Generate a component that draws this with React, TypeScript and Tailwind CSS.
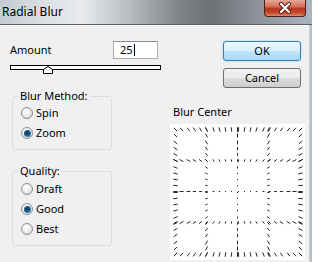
import React from "react";

const FONT = "font-['Noto_Sans','Liberation_Sans',sans-serif]";

function Radio({ label, checked }: { label: string; checked?: boolean }) {
  return (
    <div className="flex h-[20px] items-center pl-[8px]">
      <div className="flex h-[12px] w-[12px] items-center justify-center rounded-full border border-[#8f8f8f] bg-[radial-gradient(circle_at_40%_35%,#ffffff_0%,#ececec_50%,#cfcfcf_100%)]">
        {checked && (
          <div className="h-[7px] w-[7px] rounded-full bg-[radial-gradient(circle_at_45%_40%,#0e3a58_0%,#1c6590_55%,#7ccbea_100%)]" />
        )}
      </div>
      <span className="ml-[3px] text-[11px] leading-[14px] text-black">{label}</span>
    </div>
  );
}

function Group({ title, className, children }: { title: string; className: string; children: React.ReactNode }) {
  return (
    <fieldset className={`ml-[2px] w-[100px] rounded-[3px] border border-[#d9dee2] ${className}`}>
      <legend className="ml-[5px] px-[2px] text-[11px] leading-[14px] text-black">{title}</legend>
      {children}
    </fieldset>
  );
}

// zoom preview: short strokes along a 5x5 grid, each pointing at the centre
function BlurCenter() {
  const W = 135;
  const H = 136;
  const cx = 67.5;
  const cy = 67.5;
  const lines = [5, 36, 67, 98, 130];
  const pts: [number, number][] = [];
  for (const g of lines) {
    for (let i = 0; i <= 20; i++) {
      const t = Math.round(5 + i * 6.25);
      pts.push([t, g]);
      pts.push([g, t]);
    }
  }
  return (
    <svg width={W} height={H} className="block bg-white">
      {pts.map(([x, y], i) => {
        const dx = x + 0.5 - cx;
        const dy = y + 0.5 - cy;
        const d = Math.hypot(dx, dy);
        if (d < 1) return null;
        const len = Math.max(1, Math.min(4.5, d * 0.075));
        const ux = (dx / d) * (len / 2);
        const uy = (dy / d) * (len / 2);
        return (
          <line
            key={i}
            x1={x + 0.5 - ux}
            y1={y + 0.5 - uy}
            x2={x + 0.5 + ux}
            y2={y + 0.5 + uy}
            stroke="#111"
            strokeWidth={0.9}
          />
        );
      })}
    </svg>
  );
}

export default function App() {
  return (
    <div className={`relative h-[262px] w-[312px] overflow-hidden bg-[#f0f0f0] ${FONT}`}>
      {/* Title bar */}
      <div className="relative h-[25px] border-b border-[#5b6167] bg-[linear-gradient(90deg,#c3cad2_0%,#dce0e4_14%,#e9ebed_26%,#b7bbbf_42%,#7d8287_58%,#6c7176_68%,#8b9197_82%,#a9b6c3_100%)]">
        <span className="absolute left-[2px] top-[4px] text-[12px] leading-[16px] text-black">Radial Blur</span>
        <div className="absolute right-[6px] top-0 flex h-[17px] w-[42px] items-center justify-center rounded-b-[4px] border border-t-0 border-[#4f2219] bg-[linear-gradient(180deg,#e7a897_0%,#d4705a_40%,#b8331c_55%,#c44a2c_80%,#e0876a_100%)]">
          <svg width="14" height="12" viewBox="0 0 14 12">
            <path d="M3 2 L11 10 M11 2 L3 10" stroke="#4a1c14" strokeWidth="4" strokeLinecap="round" />
            <path d="M3 2 L11 10 M11 2 L3 10" stroke="#fff" strokeWidth="2.2" strokeLinecap="round" />
          </svg>
        </div>
      </div>
      <div className="h-px bg-[#fafafa]" />

      {/* Body */}
      <div className="flex pl-[10px] pt-[15px]">
        <div className="w-[151px]">
          <div className="flex h-[18px] items-center justify-between pr-[3px]">
            <span className="text-[11px] leading-[14px] text-black">Amount</span>
            <div className="flex h-[18px] w-[45px] items-center border border-[#abadb3] border-t-[#8a8c93] bg-white pl-[6px]">
              <span className="text-[11px] leading-[14px] text-black">25</span>
              <div className="ml-px h-[12px] w-px bg-black" />
            </div>
          </div>
          <div className="relative mt-[6px] h-[9px]">
            <div className="h-[5px] w-[151px] border border-black bg-white" />
            <svg width="10" height="8" className="absolute left-[33px] top-[1px]">
              <path d="M0.5 7.5 L0.5 3.5 L5 0.5 L9.5 3.5 L9.5 7.5 Z" fill="#fff" stroke="#000" strokeWidth="1" />
            </svg>
          </div>

          <Group title="Blur Method:" className="mt-[15px] h-[61px]">
            <Radio label="Spin" />
            <Radio label="Zoom" checked />
          </Group>

          <Group title="Quality:" className="mt-[14px] h-[82px]">
            <div className="mt-px">
              <Radio label="Draft" />
              <Radio label="Good" checked />
              <Radio label="Best" />
            </div>
          </Group>
        </div>

        <div className="ml-[9px] w-[135px]">
          <button className="ml-[53px] flex h-[20px] w-[78px] items-center justify-center rounded-[3px] border border-[#3c7fb1] bg-[linear-gradient(180deg,#eaf6fd_0%,#d9f0fc_50%,#bee6fd_51%,#a7d9f5_100%)] text-[11px] leading-[14px] text-black shadow-[0_0_2px_#7dc2ea]">
            OK
          </button>
          <button className="ml-[53px] mt-[7px] flex h-[20px] w-[78px] items-center justify-center rounded-[3px] border border-[#707070] bg-[linear-gradient(180deg,#f2f2f2_0%,#ebebeb_50%,#dddddd_51%,#cfcfcf_100%)] text-[11px] leading-[14px] text-black">
            Cancel
          </button>
          <div className="mt-[17px] pl-[3px] text-[11px] leading-[14px] text-black">Blur Center</div>
          <div className="mt-[5px]">
            <BlurCenter />
          </div>
        </div>
      </div>

      {/* window frame, right edge */}
      <div className="absolute right-0 top-[25px] h-[237px] w-[3px] border-l border-[#c9d0d6] bg-[#b4bfca]" />
    </div>
  );
}
